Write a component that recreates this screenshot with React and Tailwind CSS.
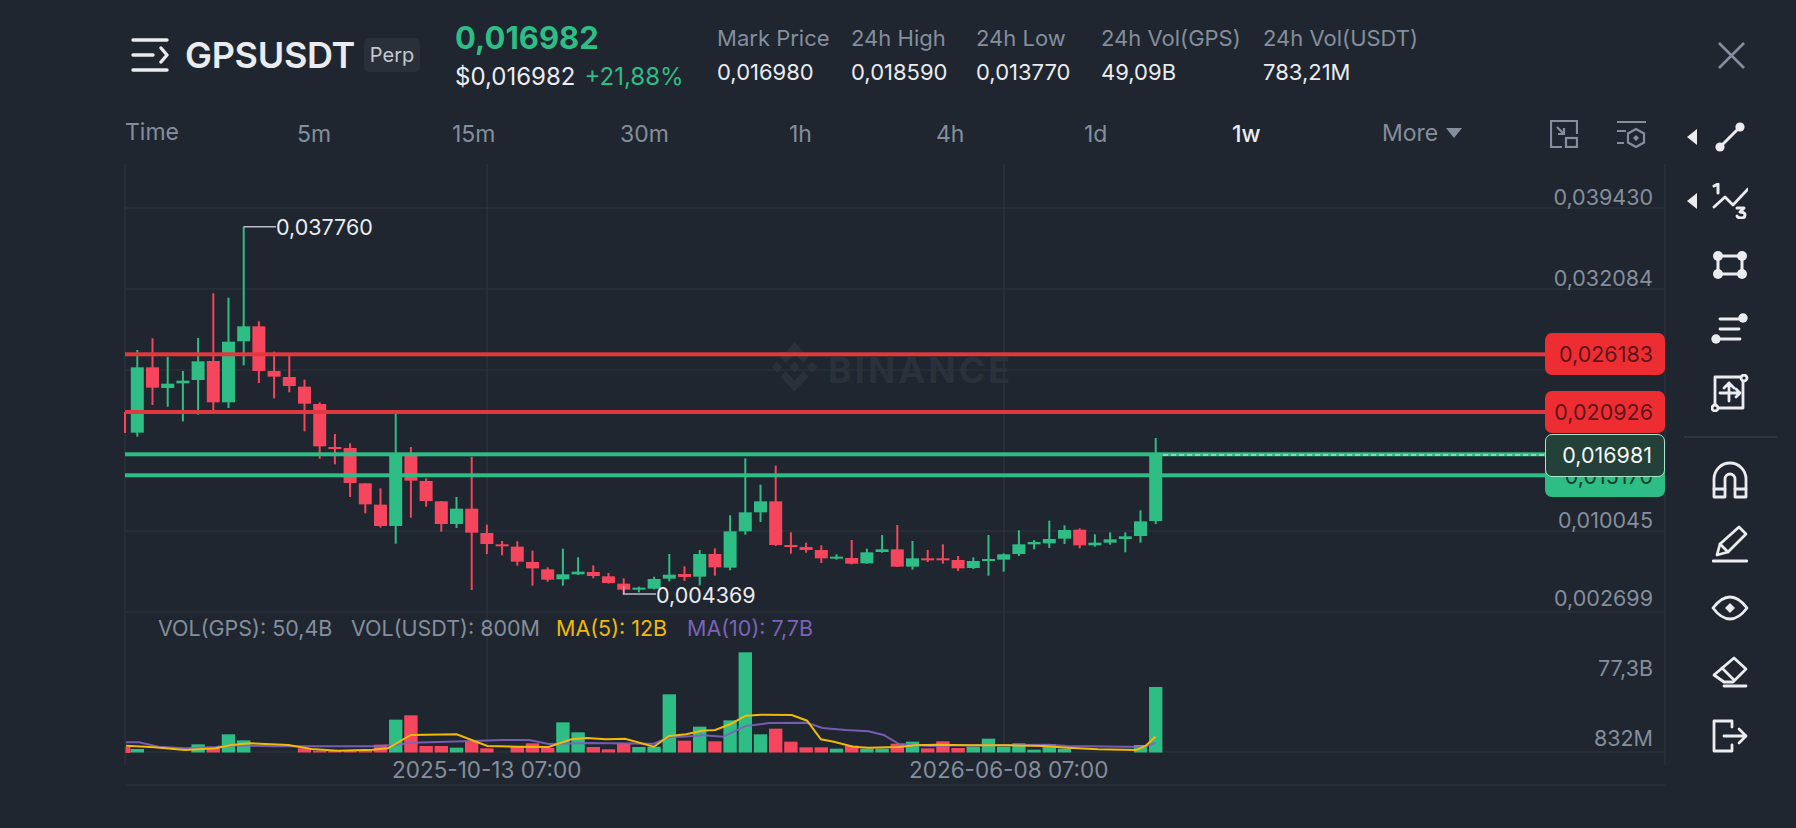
const G = '#2ebd85', R = '#f6465d';
const cz3 = [
['G',420,472,668,680],['R',385,472,533,585],['G',440,521,534,590],['G',483,512,520,634],['G',384,454,510,614],['R',250,453,577,604],['G',263,395,577,594],['G',50,349,394,466],['R',334,349,483,519],['R',425,483,500,565],['R',435,501,528,547],['R',509,530,581,664],['R',577,582,709,746],['R',672,711,717,763],['R',700,714,819,861],['R',820,820,883,910],['R',835,884,948,953],['G',612,735,948,1001],['R',711,738,812,923],['R',805,813,873,890],['R',873,874,942,965],['G',861,896,942,954],['R',740,896,968,1140],['R',944,969,1002,1032],['R',993,1003,1008,1036],['R',994,1010,1055,1067],['R',1022,1056,1075,1127],['R',1072,1078,1109,1115],['G',1016,1093,1108,1127]];
const cz4 = [
['G',472,515,523,525],['R',496,516,528,535],['R',519,529,549,551],['R',535,551,569,583],['G',560,563,568,577],['G',530,537,566,568],['G',462,524,536,544],['R',499,522,531,543],['G',450,462,530,556],['R',445,462,502,527],['G',346,394,503,511],['G',175,337,394,404],['G',254,304,337,366],['R',197,304,435,438],['R',397,435,441,461],['R',428,441,450,458],['R',436,450,475,489],['G',463,470,475,479],['R',420,474,491,493],['G',446,457,490,491],['G',405,448,456,458],['R',375,448,500,501],['G',423,475,500,509],['R',450,475,480,486],['R',433,475,480,491],['R',468,480,505,513],['G',472,483,504,507],['G',405,477,481,527],['G',460,463,479,515],['G',391,433,462,468],['G',420,426,433,448],['G',362,417,430,444],['G',376,390,416,432],['R',385,389,436,445],['G',403,428,436,440],['G',397,418,428,434],['G',397,409,417,457],['G',331,364,408,428],['G',114,168,363,372]];
const candles = [
  ...cz3.map(c => [c[0], ...c.slice(1).map(v => 210 + v / 3)]),
  ...cz4.map(c => [c[0], ...c.slice(1).map(v => 400 + v / 3)]),
];
const cx = i => 137.3 + 15.2 * i;
const vol = {0:['G',447],4:['G',433],5:['R',444],6:['G',403],7:['G',421],11:['R',445],12:['R',452],13:['R',450],14:['R',450],15:['R',450],16:['R',434],17:['G',359],18:['R',346],19:['R',438],20:['R',438],21:['G',443],22:['R',423],23:['R',445],25:['R',441],26:['R',430],27:['R',444],28:['G',367],29:['G',397],30:['R',441],31:['R',448],32:['R',430],33:['G',441],34:['G',440],35:['G',283],36:['R',422],37:['G',380],38:['R',424],39:['G',361],40:['G',157],41:['G',403],42:['R',386],43:['R',425],44:['R',442],45:['R',442],46:['G',446],47:['R',437],48:['G',446],49:['G',446],50:['R',431],51:['G',425],52:['R',445],53:['R',424],54:['R',444],55:['G',440],56:['G',416],57:['G',440],58:['G',430],59:['G',449],60:['G',433],61:['G',446],66:['G',435],67:['G',261]};
const y5 = [[16,437],[90,442],[170,450],[250,445],[290,435],[340,430],[440,435],[500,447],[570,452],[660,449],[700,445],[760,405],[880,403],[960,438],[1040,440],[1120,441],[1180,418],[1220,414],[1270,418],[1320,416],[1395,440],[1435,408],[1480,403],[1520,392]];
const y6 = [[40,390],[80,372],[120,347],[160,344],[240,345],[280,362],[316,418],[350,425],[400,440],[440,443],[520,441],[560,436],[620,434],[700,436],[800,436],[900,438],[960,443],[1040,448],[1140,450],[1165,437],[1190,410]];
const p5 = [[16,427],[50,427],[100,440],[170,445],[250,441],[290,436],[400,439],[660,439],[720,435],[760,428],[900,424],[1000,420],[1070,420],[1120,432],[1220,429],[1395,431],[1435,412],[1520,407]];
const p6 = [[0,405],[60,410],[120,378],[180,369],[280,368],[320,384],[380,390],[440,394],[480,405],[520,432],[600,438],[680,436],[910,434],[960,438],[1160,441],[1190,428]];
const S = 1568 / 600;
const pts = (a, b) => [...a.map(([x, y]) => [120 + x / S, 600 + y / 3]), ...b.map(([x, y]) => [700 + x / S, 600 + y / 3])].map(([x, y]) => `${x.toFixed(1)},${y.toFixed(1)}`).join(' ');

// Chart origin in page coordinates
const OX = 110, OY = 160;

function ChartDrawing() {
  return (
    <svg className="absolute inset-0" width="1570" height="640" viewBox={`${OX} ${OY} 1570 640`}>
      <path
        transform="translate(771.5 342) scale(0.365 0.397)"
        fill="#2a313b"
        d="M38.7 53l24.3-24.3L87.3 53l14.1-14.1L63 .5 24.6 38.9zM.5 63l14.1-14.1L28.7 63 14.6 77.1zM38.7 73l24.3 24.3L87.3 73l14.1 14.1L63 125.5 24.6 87.1zM97.3 63l14.1-14.1L125.5 63l-14.1 14.1zM77.3 63L63 48.7 48.7 63 63 77.3z"
      />
      <g stroke="#2e353f" strokeWidth="1.2">
        <line x1="125" y1="164" x2="125" y2="765" />
        <line x1="1665" y1="164" x2="1665" y2="765" />
        <line x1="487" y1="164" x2="487" y2="752" />
        <line x1="1004" y1="164" x2="1004" y2="752" />
        {[208, 289, 370, 531, 612, 752, 785].map(y => <line key={y} x1="125" y1={y} x2="1665" y2={y} />)}
      </g>
      <line x1="125" y1="412" x2="125" y2="433" stroke={R} strokeWidth="2" />
      {candles.map((c, i) => {
        const col = c[0] === 'G' ? G : R;
        return (
          <g key={i} fill={col}>
            <rect x={cx(i) - 1} y={c[1]} width="2" height={c[4] - c[1]} />
            <rect x={cx(i) - 6.5} y={c[2]} width="13" height={Math.max(c[3] - c[2], 2)} />
          </g>
        );
      })}
      <polyline points="243.7,226.7 276,226.7" fill="none" stroke="#b7bdc6" strokeWidth="1.5" />
      <polyline points="623.7,586 623.7,594 656,594" fill="none" stroke="#b7bdc6" strokeWidth="1.5" />
      <rect x="125" y="352.3" width="1420" height="4" fill="#e0383e" />
      <rect x="125" y="410" width="1420" height="4" fill="#e0383e" />
      <rect x="125" y="452.3" width="1420" height="4" fill="#2ebd85" />
      <rect x="125" y="473.3" width="1420" height="4" fill="#2ebd85" />
      <line x1="1163" y1="455" x2="1545" y2="455" stroke="#eaecef" strokeWidth="1.2" strokeDasharray="5 3" />
      <rect x="125.5" y="747" width="5" height="6" fill={R} />
      {Object.entries(vol).map(([i, [k, z]]) => {
        const top = 600 + z / 3;
        return <rect key={i} x={cx(+i) - 6.7} y={top} width="13.4" height={752.5 - top} fill={k === 'G' ? G : R} />;
      })}
      <polyline points={pts(p5, p6)} fill="none" stroke="#7f63c0" strokeWidth="2" strokeOpacity="0.9" />
      <polyline points={pts(y5, y6)} fill="none" stroke="#f0b90b" strokeWidth="2" />
    </svg>
  );
}

function Stat({ label, value, className }) {
  return (
    <div className={`mt-[1px] flex flex-col gap-[10px] whitespace-nowrap ${className}`}>
      <span className="text-[22px] leading-[24px] text-[#848e9c]">{label}</span>
      <span className="text-[22px] leading-[24px] text-[#eaecef]">{value}</span>
    </div>
  );
}

const tabs = [
  ['5m', 'w-[155px]'], ['15m', 'w-[168px]'], ['30m', 'w-[169px]'], ['1h', 'w-[147px]'],
  ['4h', 'w-[148px]'], ['1d', 'w-[148px]'], ['1w', 'w-[150px]'],
];

function Tool({ children, arrow }) {
  return (
    <div className="relative flex h-[64px] w-full items-center justify-center">
      {arrow && <span className="absolute left-[7px] top-1/2 h-0 w-0 -translate-y-1/2 border-y-[8px] border-r-[10px] border-y-transparent border-r-[#eaecef]" />}
      {children}
    </div>
  );
}

const ic = { fill: 'none', stroke: '#eaecef', strokeWidth: 2.8, strokeLinecap: 'round', strokeLinejoin: 'round' };
const axis = 'absolute right-[27px] text-[21.5px] leading-[24px] text-[#848e9c]';
const tag = 'absolute left-[1435px] flex w-[120px] items-center justify-end rounded-[7px] pr-[12px] text-[21.5px]';

export default function App() {
  return (
    <div className="flex h-[828px] w-[1796px] flex-col overflow-hidden bg-[#1f262f] font-['Inter',sans-serif] text-[#eaecef]">
      <header className="flex h-[105px] shrink-0 items-start pl-[131px] pt-[25px]">
        <div className="mt-[13px] flex items-center">
          <svg width="38" height="34" viewBox="0 0 38 34" fill="none" stroke="#eaecef" strokeWidth="3.4" strokeLinecap="round" strokeLinejoin="round">
            <path d="M2 2h34M2 17h20M2 32h34M30 10l6 7-6 7" />
          </svg>
          <span className="ml-[16px] text-[36px] font-semibold leading-[34px] tracking-[-0.3px] text-[#eaecef]">GPSUSDT</span>
          <span className="ml-[9px] flex h-[34px] w-[56px] items-center justify-center rounded-[5px] bg-[#2a303a] text-[20px] text-[#c4c9d1]">Perp</span>
        </div>
        <div className="-mt-[1px] ml-[35px] flex w-[262px] shrink-0 flex-col whitespace-nowrap">
          <span className="text-[31px] font-bold leading-[28px] text-[#2ebd85]">0,016982</span>
          <div className="mt-[12px] flex gap-[9px] text-[24px] leading-[26px]">
            <span className="text-[#eaecef]">$0,016982</span>
            <span className="text-[#2ebd85]">+21,88%</span>
          </div>
        </div>
        <div className="flex">
          <Stat label="Mark Price" value="0,016980" className="w-[134px]" />
          <Stat label="24h High" value="0,018590" className="w-[125px]" />
          <Stat label="24h Low" value="0,013770" className="w-[125px]" />
          <Stat label="24h Vol(GPS)" value="49,09B" className="w-[162px]" />
          <Stat label="24h Vol(USDT)" value="783,21M" className="w-[160px]" />
        </div>
        <svg className="ml-[295px] mt-[17px] shrink-0" width="27" height="27" viewBox="0 0 27 27" fill="none" stroke="#848e9c" strokeWidth="2.6">
          <path d="M1 1l25 25M26 1L1 26" />
        </svg>
      </header>

      <div className="flex min-h-0 flex-1 pl-[110px]">
        <div className="flex w-[1570px] shrink-0 flex-col">
          <div className="flex h-[55px] shrink-0 items-center pl-[15px] pt-[3px] text-[23px] text-[#848e9c]">
            <span className="mb-[3px] w-[172px]">Time</span>
            {tabs.map(([t, w]) => (
              <span key={t} className={`${w} ${t === '1w' ? 'font-medium text-[#eaecef]' : ''}`}>{t}</span>
            ))}
            <span className="mb-[2px] flex w-[168px] items-center gap-[8px]">
              More
              <span className="h-0 w-0 border-x-[8px] border-t-[10px] border-x-transparent border-t-[#848e9c]" />
            </span>
            <svg width="28" height="28" viewBox="0 0 28 28" fill="none" stroke="#848e9c" strokeWidth="2.2">
              <path d="M12 27H1V1h26v13M7 7l7 7M14 8v6H8" />
              <rect x="16" y="18" width="11" height="9" />
            </svg>
            <svg className="ml-[39px]" width="30" height="28" viewBox="0 0 30 28" fill="none" stroke="#848e9c" strokeWidth="2.2">
              <path d="M0 2h29M0 11h9M0 23h7M19 9l8 4.5v9L19 27l-8-4.5v-9z" />
              <path d="M19 15l3 3-3 3-3-3z" fill="#848e9c" stroke="none" />
            </svg>
          </div>

          <div className="relative flex-1">
            <div className="absolute left-[718px] top-[192px] text-[36px] font-bold leading-[36px] tracking-[3px] text-[#2a313b]">BINANCE</div>
            <ChartDrawing />
            <span className="absolute left-[166px] top-[55px] text-[21.5px] leading-[24px] text-[#eaecef]">0,037760</span>
            <span className="absolute left-[546px] top-[423px] text-[21.5px] leading-[24px] text-[#eaecef]">0,004369</span>

            <span className={`${axis} top-[25px]`}>0,039430</span>
            <span className={`${axis} top-[106px]`}>0,032084</span>
            <span className={`${axis} top-[348px]`}>0,010045</span>
            <span className={`${axis} top-[426px]`}>0,002699</span>
            <span className={`${axis} top-[496px]`}>77,3B</span>
            <span className={`${axis} top-[566px]`}>832M</span>

            <span className={`${tag} top-[173px] h-[42px] bg-[#ee2d33] text-[#5e1418]`}>0,026183</span>
            <span className={`${tag} top-[231px] h-[42px] bg-[#ee2d33] text-[#5e1418]`}>0,020926</span>
            <span className={`${tag} top-[296px] h-[41px] bg-[#2ebd85] text-[#123d2e]`}>0,015170</span>
            <span className={`${tag} top-[274px] h-[43px] border border-[#a8e6cc] bg-[#234139] text-[#f5f7f8]`}>0,016981</span>

            <div className="absolute left-[48px] top-[456px] flex whitespace-nowrap text-[21.5px] leading-[24px] text-[#848e9c]">
              <span className="w-[193px]">VOL(GPS): 50,4B</span>
              <span className="w-[205px]">VOL(USDT): 800M</span>
              <span className="w-[131px] text-[#f0b90b]">MA(5): 12B</span>
              <span className="text-[#7a63b8]">MA(10): 7,7B</span>
            </div>
            <span className="absolute left-[282px] top-[598px] text-[22.5px] leading-[24px] text-[#848e9c]">2025-10-13 07:00</span>
            <span className="absolute left-[799px] top-[598px] text-[22.5px] leading-[24px] text-[#848e9c]">2026-06-08 07:00</span>
          </div>
        </div>

        <aside className="flex w-[100px] shrink-0 flex-col">
          <Tool arrow>
            <svg width="32" height="32" viewBox="0 0 32 32" {...ic}>
              <path d="M7 25L25 7" strokeWidth="3" />
              <circle cx="6" cy="26" r="4.6" fill="#eaecef" stroke="none" />
              <circle cx="26" cy="6" r="4.6" fill="#eaecef" stroke="none" />
            </svg>
          </Tool>
          <Tool arrow>
            <svg width="36" height="36" viewBox="0 0 36 36" {...ic}>
              <path d="M2 24l11-10 8 8L36 6" />
              <path d="M2 3l4-2v9" strokeWidth="3" />
              <path d="M25 25h7l-4 4c3 0 5 1 5 3s-2 3-4 3-4-1-4-2" strokeWidth="3" />
            </svg>
          </Tool>
          <Tool>
            <svg width="34" height="28" viewBox="0 0 34 28" {...ic}>
              <rect x="5" y="5" width="24" height="18" strokeWidth="3" />
              <circle cx="5" cy="5" r="5" fill="#eaecef" stroke="none" />
              <circle cx="29" cy="5" r="5" fill="#eaecef" stroke="none" />
              <circle cx="5" cy="23" r="5" fill="#eaecef" stroke="none" />
              <circle cx="29" cy="23" r="5" fill="#eaecef" stroke="none" />
            </svg>
          </Tool>
          <Tool>
            <svg width="38" height="32" viewBox="0 0 38 32" {...ic}>
              <path d="M9 6h24M9 16h19M10 26h19" strokeWidth="2.8" />
              <circle cx="32" cy="5" r="4.7" fill="#eaecef" stroke="none" />
              <circle cx="5" cy="26" r="4.7" fill="#eaecef" stroke="none" />
            </svg>
          </Tool>
          <Tool>
            <svg width="38" height="38" viewBox="0 0 38 38" {...ic}>
              <path d="M4 32V3h28v31H7" />
              <circle cx="33" cy="4" r="3" fill="#1f262f" />
              <circle cx="4" cy="34" r="3" fill="#1f262f" />
              <path d="M18 27V9M13 14l5-5 5 5M18 19h11M25 15l4 4-4 4M9 19h9" />
            </svg>
          </Tool>
          <div className="mt-[11px] h-[2px] w-[93px] shrink-0 self-center bg-[#2e353f]" />
          <div className="h-[10px] shrink-0" />
          <Tool>
            <svg width="36" height="38" viewBox="0 0 36 38" {...ic}>
              <path d="M2 36V18a16 16 0 0 1 32 0v18h-11V18a5 5 0 0 0-10 0v18z" />
              <path d="M2 28h11M23 28h11" />
            </svg>
          </Tool>
          <Tool>
            <svg width="36" height="38" viewBox="0 0 36 38" {...ic}>
              <path d="M27 2l7 7-18 18-11 3 3-11z" />
              <path d="M8 19l8 8" />
              <path d="M1 36h34" />
            </svg>
          </Tool>
          <Tool>
            <svg width="38" height="26" viewBox="0 0 38 26" {...ic}>
              <path d="M2 13C8 5 13 2 19 2s11 3 17 11c-6 8-11 11-17 11S8 21 2 13z" />
              <path d="M19 8l5 5-5 5-5-5z" fill="#eaecef" stroke="none" />
            </svg>
          </Tool>
          <Tool>
            <svg width="36" height="32" viewBox="0 0 36 32" {...ic}>
              <path d="M22 2l12 11-13 13H12L2 19z" />
              <path d="M10 12l12 12" />
              <path d="M12 30h22" />
            </svg>
          </Tool>
          <Tool>
            <svg width="36" height="34" viewBox="0 0 36 34" {...ic}>
              <path d="M20 8V2H2v30h18v-6" />
              <path d="M12 17h22M27 10l7 7-7 7" />
            </svg>
          </Tool>
        </aside>
      </div>
    </div>
  );
}
